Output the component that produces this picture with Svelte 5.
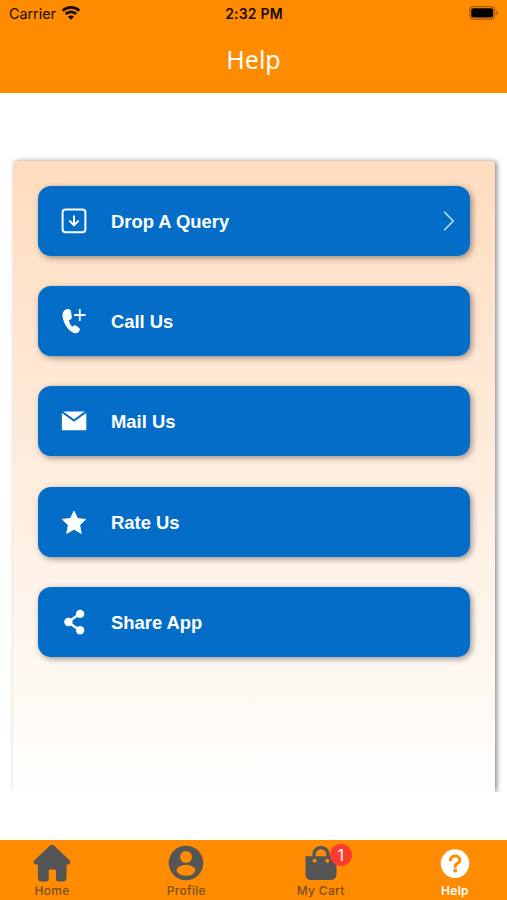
<script lang="ts">
  type Action = { id: string; label: string; arrow?: boolean }

  const actions: Action[] = [
    { id: 'query', label: 'Drop A Query', arrow: true },
    { id: 'call', label: 'Call Us' },
    { id: 'mail', label: 'Mail Us' },
    { id: 'rate', label: 'Rate Us' },
    { id: 'share', label: 'Share App' },
  ]

  const tabs = [
    { id: 'home', label: 'Home' },
    { id: 'profile', label: 'Profile' },
    { id: 'cart', label: 'My Cart' },
    { id: 'help', label: 'Help' },
  ]

  let active = $state('help')
  let cartCount = $state(1)
</script>

<div class="screen">
  <header>
    <div class="status">
      <div class="carrier">
        <span>Carrier</span>
        <svg width="18" height="14" viewBox="0 0 18 14" fill="none" stroke="#160c00" stroke-width="2.7">
          <path d="M.8 4.7a11.7 11.7 0 0 1 16.4 0" />
          <path d="M3.7 8a7.6 7.6 0 0 1 10.6 0" />
          <path d="M9 13.8 5.900 10.7a4.4 4.4 0 0 1 6.200 0Z" fill="#160c00" stroke="none" />
        </svg>
      </div>
      <span class="time">2:32 PM</span>
      <svg class="battery" width="30" height="14" viewBox="0 0 30 14">
        <rect x=".7" y=".7" width="25" height="12.4" rx="3.6" fill="none" stroke="#a65b04" stroke-width="1.2" />
        <rect x="2.2" y="2.2" width="22" height="9.4" rx="2" fill="#000" />
        <path d="M27.3 4.7c2.3.8 2.3 3.6 0 4.4Z" fill="#a65b04" />
      </svg>
    </div>
    <h1>Help</h1>
  </header>

  <main>
    <div class="panel">
      {#each actions as action (action.id)}
        <button class="action">
          <svg class="icon" width="28" height="28" viewBox="0 0 28 28" fill="#fff">
            {#if action.id === 'query'}
              <g fill="none" stroke="#fff" stroke-width="2" stroke-linecap="round" stroke-linejoin="round">
                <rect x="2.6" y="2.4" width="22.8" height="22.8" rx="3" />
                <path d="M14 9.3v8.6M9.9 14.1l4.1 4.1 4.1-4.1" />
              </g>
            {:else if action.id === 'call'}
              <path d="M6.7 2.200C3.8 2.900 2.300 5.200 2.500 8.500c.5 7 5.200 14.600 10.700 17.200 2.900 1.300 5.600.1 6.500-2.500.4-1.100 0-1.900-.8-2.500l-2.800-2c-1.100-.8-2.100-.5-2.900.2l-1 .8c-1.700-1.600-3-4.100-3.400-6.400l1.700-.9c1-.5 1.500-1.200 1.300-2.400l-.7-5c-.2-1.900-1.900-3.300-4.400-2.800Z" />
              <path d="M19.8 2v12M14 8h11.600" fill="none" stroke="#fff" stroke-width="1.8" />
            {:else if action.id === 'mail'}
              <path d="M3.200 4.500h21.600L14 12.300Z" />
              <path d="M1.900 5.900 14 14.700 26.300 5.900v17.400H1.900Z" />
            {:else if action.id === 'rate'}
              <path stroke="#fff" stroke-width=".8" stroke-linejoin="round" d="m14 3 3.500 7.400 8.200 1-6 5.700 1.600 8.300L14 21.300l-7.300 4.100 1.600-8.300-6-5.700 8.200-1Z" />
            {:else}
              <path d="M20 5.800 8 14l12 8.600" fill="none" stroke="#fff" stroke-width="2.4" />
              <circle cx="20.100" cy="5.900" r="4.200" />
              <circle cx="8.400" cy="14" r="4.200" />
              <circle cx="20.100" cy="22.300" r="4.200" />
            {/if}
          </svg>
          <span class="label">{action.label}</span>
          {#if action.arrow}
            <svg class="arrow" width="12" height="20" viewBox="0 0 12 20" fill="none" stroke="#c5e2fa" stroke-width="1.5">
              <path d="m1.200.8 9 9.200-9 9.200" />
            </svg>
          {/if}
        </button>
      {/each}
    </div>
  </main>

  <nav>
    {#each tabs as tab (tab.id)}
      <button class="tab" class:active={active === tab.id} onclick={() => (active = tab.id)}>
        <span class="tab-icon">
          <svg width="38" height="38" viewBox="0 0 38 38" fill="currentColor">
            {#if tab.id === 'home'}
              <path d="M16.7 1.800a3.300 3.300 0 0 1 4.600 0L36.500 16.300c1.600 1.600.8 4.200-1.500 4.200H33.500V34c0 2.300-1 3.400-3.300 3.400H25.500c-1.600 0-2.500-.8-2.500-2.500V27.500c0-1.300-.6-1.900-1.900-1.900H17.600c-1.300 0-1.900.6-1.900 1.900V34.900c0 1.700-.9 2.500-2.500 2.500H8.200c-2.300 0-3.300-1.100-3.300-3.400V20.500H3c-2.300 0-3.100-2.600-1.500-4.200Z" />
            {:else if tab.id === 'profile'}
              <circle cx="19" cy="19" r="17.3" />
              <circle class="cutout" cx="19" cy="12.9" r="6" />
              <ellipse class="cutout" cx="19" cy="26.300" rx="9.400" ry="5.500" />
            {:else if tab.id === 'cart'}
              <path d="M12 17V10.500a7 7 0 0 1 14 0V17" fill="none" stroke="currentColor" stroke-width="3.4" />
              <path d="M3.500 12.300h31v18.200a5.500 5.500 0 0 1-5.500 5.500H9a5.500 5.500 0 0 1-5.500-5.500Z" />
              <circle class="cutout" cx="12.600" cy="16.800" r="2" />
              <circle class="cutout" cx="25.400" cy="16.800" r="2" />
            {:else}
              <circle cx="19" cy="19.600" r="14.3" />
              <path class="mark" d="M14.400 16c.2-5.300 9.400-5.200 9.400.2 0 3.100-4.600 3.200-4.600 6.200" />
              <circle class="cutout" cx="19.200" cy="26.500" r="1.900" />
            {/if}
          </svg>
          {#if tab.id === 'cart' && cartCount > 0}
            <span class="badge">{cartCount}</span>
          {/if}
        </span>
        <span class="tab-label">{tab.label}</span>
      </button>
    {/each}
  </nav>
</div>

<style>
  :global(body) {
    margin: 0;
    background: #fff;
  }
  .screen {
    display: flex;
    flex-direction: column;
    height: 900px;
    overflow: hidden;
    font-family: Inter, Roboto, sans-serif;
  }
  button {
    border: 0;
    padding: 0;
    font: inherit;
    cursor: pointer;
  }
  header {
    height: 92.5px;
    background: #ff8b00;
    flex: none;
  }
  .status {
    display: grid;
    grid-template-columns: 1fr auto 1fr;
    align-items: center;
    height: 26px;
    padding: 0 8px 0 9px;
    color: #160c00;
    font-size: 14.3px;
  }
  .carrier {
    display: flex;
    align-items: center;
    gap: 6px;
  }
  .time {
    font-weight: 600;
    font-size: 14px;
    letter-spacing: 0.2px;
  }
  .battery {
    justify-self: end;
  }
  h1 {
    margin: 0;
    padding-top: 15px;
    color: #fff;
    font: 400 25px/36px 'Noto Sans', sans-serif;
    text-align: center;
  }
  main {
    flex: 1;
    padding: 68.5px 12px 0 13px;
  }
  .panel {
    display: flex;
    flex-direction: column;
    gap: 30.4px;
    box-sizing: border-box;
    height: 631px;
    padding: 24.6px 25px 0;
    border-radius: 4px 4px 0 0;
    background: linear-gradient(#ffdcbf, #fffefd);
    box-shadow: 2px 0 5px rgba(0, 0, 0, 0.45);
    clip-path: inset(-8px -8px 0 -8px);
  }
  .action {
    display: flex;
    align-items: center;
    flex: none;
    height: 70px;
    padding: 0 15px 0 22px;
    border-radius: 13px;
    background: #046dc7;
    box-shadow: 2px 2px 6px rgba(0, 0, 0, 0.4);
    color: #fff;
  }
  .label {
    flex: 1;
    margin: 2px 0 0 23px;
    font: 700 18.4px/24px 'Liberation Sans', Arial, sans-serif;
    text-align: left;
  }
  nav {
    display: grid;
    grid-template-columns: repeat(4, 134.3px);
    justify-content: center;
    flex: none;
    height: 60px;
    background: #ff8b00;
  }
  .tab {
    display: flex;
    flex-direction: column;
    align-items: center;
    padding-top: 4px;
    background: none;
    color: #555;
  }
  .tab.active {
    color: #fff;
  }
  .tab-icon {
    position: relative;
    height: 38px;
  }
  .cutout {
    fill: #ff8b00;
  }
  .mark {
    fill: none;
    stroke: #ff8b00;
    stroke-width: 3;
    stroke-linecap: round;
  }
  .badge {
    position: absolute;
    top: 0;
    left: 28px;
    width: 22px;
    height: 22px;
    border-radius: 50%;
    background: #fc3b30;
    color: #fff;
    font-size: 16px;
    line-height: 22px;
    text-align: center;
  }
  .tab-label {
    margin-top: 1px;
    color: #76501f;
    font-size: 12px;
    font-weight: 500;
    line-height: 16px;
    letter-spacing: 0.3px;
  }
  .active .tab-label {
    color: #fff;
    font-weight: 600;
  }
</style>
